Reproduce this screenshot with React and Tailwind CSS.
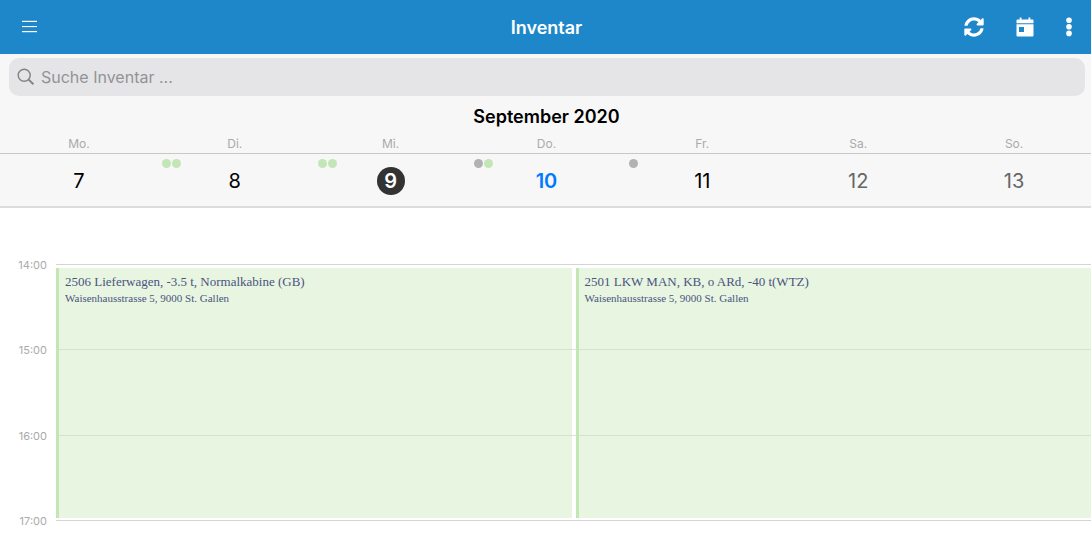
import React, { useState } from 'react';
import { FaSyncAlt } from 'react-icons/fa';

const days = [
  { short: 'Mo.', date: 7, dots: [] },
  { short: 'Di.', date: 8, dots: ['bg-[#c3e6b6]', 'bg-[#c3e6b6]'] },
  { short: 'Mi.', date: 9, dots: ['bg-[#c3e6b6]', 'bg-[#c3e6b6]'] },
  { short: 'Do.', date: 10, dots: ['bg-[#b2b2b2]', 'bg-[#c3e6b6]'], today: true },
  { short: 'Fr.', date: 11, dots: ['bg-[#b2b2b2]'] },
  { short: 'Sa.', date: 12, dots: [], weekend: true },
  { short: 'So.', date: 13, dots: [], weekend: true },
];

const hours = ['14:00', '15:00', '16:00'];

const events = [
  { title: '2506 Lieferwagen, -3.5 t, Normalkabine (GB)', address: 'Waisenhausstrasse 5, 9000 St. Gallen' },
  { title: '2501 LKW MAN, KB, o ARd, -40 t(WTZ)', address: 'Waisenhausstrasse 5, 9000 St. Gallen' },
];

const dayClass = (day, selected) => {
  if (day.date === selected) return 'bg-[#333] text-white font-semibold';
  if (day.today) return 'text-[#007aff] font-semibold';
  if (day.weekend) return 'text-[#666]';
  return 'text-black';
};

const MenuIcon = () => (
  <svg viewBox="0 0 16 14" className="w-4 h-3.5" fill="currentColor" aria-hidden="true">
    <rect x="1" y="0.8" width="15" height="1.2" />
    <rect x="1" y="6" width="15" height="1.1" />
    <rect x="1" y="11" width="15" height="1.2" />
  </svg>
);

const CalendarIcon = () => (
  <svg viewBox="0 0 18 20" className="w-[18px] h-5" fill="currentColor" aria-hidden="true">
    <path d="M1.5 2.5h2.2V0.5h1.8v2h7V0.5h1.8v2h2.2q1 0 1 1V6.2H0.5V3.5q0-1 1-1z" />
    <path fillRule="evenodd" d="M0.5 7.2h17v11.3q0 1-1 1h-15q-1 0-1-1zM3 10v5h5v-5z" />
  </svg>
);

const MoreIcon = () => (
  <svg viewBox="0 0 6 20" className="w-1.5 h-5" fill="currentColor" aria-hidden="true">
    <circle cx="3" cy="3.2" r="2.8" />
    <circle cx="3" cy="9.8" r="2.8" />
    <circle cx="3" cy="16.4" r="2.8" />
  </svg>
);

const SearchIcon = () => (
  <svg viewBox="0 0 18 18" className="w-[18px] h-[18px] shrink-0 text-[#838386]" fill="none" stroke="currentColor" aria-hidden="true">
    <circle cx="7.2" cy="7.2" r="6" strokeWidth="1.4" />
    <path d="M11.6 11.6l4.8 4.6" strokeWidth="2" />
  </svg>
);

export default function App() {
  const [selected, setSelected] = useState(9);
  const [query, setQuery] = useState('');

  return (
    <div className="min-h-screen bg-white font-['Inter',sans-serif] overflow-hidden">
      {/* Navbar */}
      <header className="h-[54px] bg-[#1e87ca] text-white grid grid-cols-[1fr_auto_1fr] items-center pl-[21px] pr-[19px]">
        <button aria-label="Menü" className="justify-self-start"><MenuIcon /></button>
        <h1 className="pt-0.5 text-lg leading-6 font-semibold">Inventar</h1>
        <div className="flex items-center justify-self-end gap-8">
          <button aria-label="Aktualisieren"><FaSyncAlt className="w-5 h-5" /></button>
          <button aria-label="Heute"><CalendarIcon /></button>
          <button aria-label="Mehr"><MoreIcon /></button>
        </div>
      </header>

      <div className="bg-[#f7f7f7] border-b-2 border-[#dcdcdc]">
        {/* Search */}
        <div className="pl-[9px] pr-1.5 pt-1">
          <label className="flex items-center gap-1.5 h-[38px] rounded-[10px] bg-[#e5e5e7] px-2">
            <SearchIcon />
            <input
              type="text"
              aria-label="Suche Inventar"
              placeholder="Suche Inventar ..."
              value={query}
              onChange={e => setQuery(e.target.value)}
              className="flex-1 min-w-0 bg-transparent outline-none text-base leading-6 placeholder:text-[#939396]"
            />
          </label>
        </div>

        <h2 className="pt-[9px] pl-0.5 text-center text-lg leading-6 font-semibold text-black">September 2020</h2>

        {/* Week strip */}
        <div className="border-b border-[#c8c8c8]">
          <div className="grid grid-cols-7 pl-px -mr-px pt-[7px] pb-px text-center text-xs leading-4 text-[#aaa]">
            {days.map(day => <span key={day.date}>{day.short}</span>)}
          </div>
        </div>
        <div className="grid grid-cols-7 h-[52px] pl-px -mr-px">
          {days.map(day => (
            <div key={day.date} className="relative flex items-center justify-center pt-0.5">
              <div className="absolute left-[5px] top-[5px] flex gap-px">
                {day.dots.map((color, i) => <span key={i} className={`w-[9px] h-[9px] rounded-full ${color}`} />)}
              </div>
              <button
                onClick={() => setSelected(day.date)}
                className={`w-7 h-7 flex items-center justify-center rounded-full text-xl leading-6 ${dayClass(day, selected)}`}
              >
                {day.date}
              </button>
            </div>
          ))}
        </div>
      </div>

      {/* Timeline */}
      <div className="grid grid-cols-[56px_1fr] pt-14">
        <div className="h-64 grid grid-rows-3 text-right pr-[9px] text-[11px] leading-4 text-[#aaa]">
          {hours.map(hour => <span key={hour} className="-mt-[7px]">{hour}</span>)}
        </div>
        <div className="grid">
          <div className="col-start-1 row-start-1 h-64 grid grid-rows-3">
            {hours.map(hour => <div key={hour} className="border-t border-[#e0e0e0] first:border-[#d4d4d4]" />)}
          </div>
          <div className="col-start-1 row-start-1 grid grid-cols-2 gap-1 pt-1 pb-0.5">
            {events.map(event => (
              <article key={event.title} className="border-l-[3px] border-[#c3e6b4] bg-[#c3e6b4]/40 pl-1.5 pt-[5px] font-['Liberation_Serif',serif] text-[#4a5480]">
                <h3 className="text-[13px] leading-[17px]">{event.title}</h3>
                <p className="text-[11px] leading-4">{event.address}</p>
              </article>
            ))}
          </div>
        </div>
        <div className="text-right pr-[9px] text-[11px] leading-4 text-[#aaa]">
          <span className="block -mt-[7px]">17:00</span>
        </div>
        <div className="border-t border-[#d4d4d4]" />
      </div>
    </div>
  );
}
